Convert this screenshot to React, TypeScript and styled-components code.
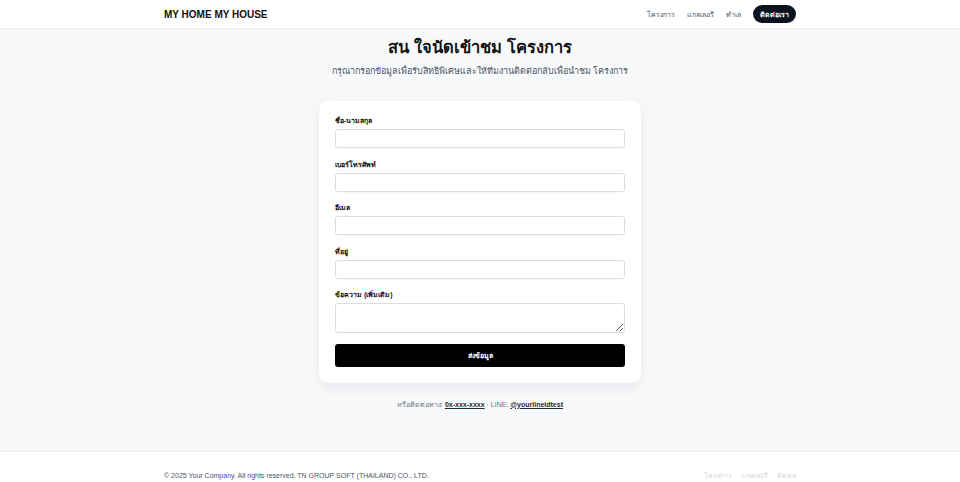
import styled, { createGlobalStyle } from "styled-components";

const GlobalStyle = createGlobalStyle`
  * { box-sizing: border-box; }
  body {
    margin: 0;
    font-family: "Liberation Sans", Arial, sans-serif;
    color: #111827;
    background: #ffffff;
  }
`;

const Header = styled.header`
  background: #ffffff;
  border-bottom: 1px solid #eceef1;
`;

const Container = styled.div`
  max-width: 632px;
  margin: 0 auto;
`;

const HeaderBar = styled(Container)`
  height: 28px;
  display: flex;
  align-items: center;
  justify-content: space-between;
`;

const Logo = styled.div`
  font-size: 10px;
  font-weight: 700;
  color: #111;
`;

const Nav = styled.nav`
  display: flex;
  align-items: center;
  gap: 12px;
`;

const NavLink = styled.a`
  font-size: 7px;
  color: #4b5563;
  text-decoration: none;
`;

const ContactButton = styled.a`
  display: inline-flex;
  align-items: center;
  height: 18px;
  padding: 0 7px;
  border-radius: 9px;
  background: #0b1220;
  color: #fff;
  font-size: 7px;
  font-weight: 700;
  text-decoration: none;
`;

const Main = styled.main`
  background: #f8f9fb;
  padding: 7px 0 41px;
  border-bottom: 1px solid #eceef1;
`;

const Title = styled.h1`
  margin: 0;
  text-align: center;
  font-size: 16.5px;
  font-weight: 700;
  line-height: 22px;
  color: #111;
`;

const Subtitle = styled.p`
  margin: 6px 0 0;
  text-align: center;
  font-size: 9px;
  line-height: 14px;
  color: #4b5563;
`;

const Card = styled.form`
  width: 322px;
  margin: 23px auto 0;
  background: #fff;
  border-radius: 10px;
  box-shadow: 0 4px 14px rgba(15, 23, 42, 0.08);
  padding: 14px 16px 16px;
  display: flex;
  flex-direction: column;
  gap: 10.5px;
`;

const Field = styled.div`
  display: flex;
  flex-direction: column;
  gap: 2px;
`;

const Label = styled.label`
  font-size: 7px;
  font-weight: 700;
  line-height: 12px;
  color: #111;
`;

const Input = styled.input`
  height: 19px;
  border: 1px solid #d9dce1;
  border-radius: 3px;
  background: #fff;
  box-shadow: 0 1px 1px rgba(0, 0, 0, 0.03);
  outline: none;
`;

const TextArea = styled.textarea`
  height: 30px;
  border: 1px solid #d9dce1;
  border-radius: 3px;
  background: #fff;
  outline: none;
  resize: vertical;
`;

const Submit = styled.button`
  height: 23px;
  border: none;
  border-radius: 3px;
  background: #000;
  color: #fff;
  font-size: 7px;
  font-weight: 700;
  font-family: inherit;
`;

const AltContact = styled.p`
  margin: 16px 0 0;
  text-align: center;
  font-size: 7px;
  color: #6b7280;
`;

const AltLink = styled.a`
  color: #1f2937;
  font-weight: 700;
  text-decoration: underline;
`;

const Footer = styled.footer`
  background: #fff;
`;

const FooterBar = styled(Container)`
  height: 48px;
  display: flex;
  align-items: center;
  justify-content: space-between;
`;

const Copy = styled.span`
  font-size: 7px;
  color: #4b5563;
`;

const FooterLinks = styled.div`
  display: flex;
  gap: 9px;
`;

const FooterLink = styled.a`
  font-size: 7px;
  color: #d4d6da;
  text-decoration: none;
`;

const fields = ["ชื่อ-นามสกุล", "เบอร์โทรศัพท์", "อีเมล", "ที่อยู่"];

export default function App() {
  return (
    <>
      <GlobalStyle />
      <Header>
        <HeaderBar>
          <Logo>MY HOME MY HOUSE</Logo>
          <Nav>
            <NavLink href="#">โครงการ</NavLink>
            <NavLink href="#">แกลเลอรี</NavLink>
            <NavLink href="#">ทำเล</NavLink>
            <ContactButton href="#">ติดต่อเรา</ContactButton>
          </Nav>
        </HeaderBar>
      </Header>
      <Main>
        <Title>สน ใจนัดเข้าชม โครงการ</Title>
        <Subtitle>กรุณากรอกข้อมูลเพื่อรับสิทธิพิเศษและให้ทีมงานติดต่อกลับเพื่อนำชม โครงการ</Subtitle>
        <Card onSubmit={(e) => e.preventDefault()}>
          {fields.map((f) => (
            <Field key={f}>
              <Label>{f}</Label>
              <Input />
            </Field>
          ))}
          <Field>
            <Label>ข้อความ (เพิ่มเติม)</Label>
            <TextArea />
          </Field>
          <Submit type="submit">ส่งข้อมูล</Submit>
        </Card>
        <AltContact>
          หรือติดต่อทาง: <AltLink href="#">0x-xxx-xxxx</AltLink> · LINE:{" "}
          <AltLink href="#">@yourlineidtest</AltLink>
        </AltContact>
      </Main>
      <Footer>
        <FooterBar>
          <Copy>© 2025 Your Company. All rights reserved. TN GROUP SOFT (THAILAND) CO., LTD.</Copy>
          <FooterLinks>
            <FooterLink href="#">โครงการ</FooterLink>
            <FooterLink href="#">แกลเลอรี</FooterLink>
            <FooterLink href="#">ติดต่อ</FooterLink>
          </FooterLinks>
        </FooterBar>
      </Footer>
    </>
  );
}
